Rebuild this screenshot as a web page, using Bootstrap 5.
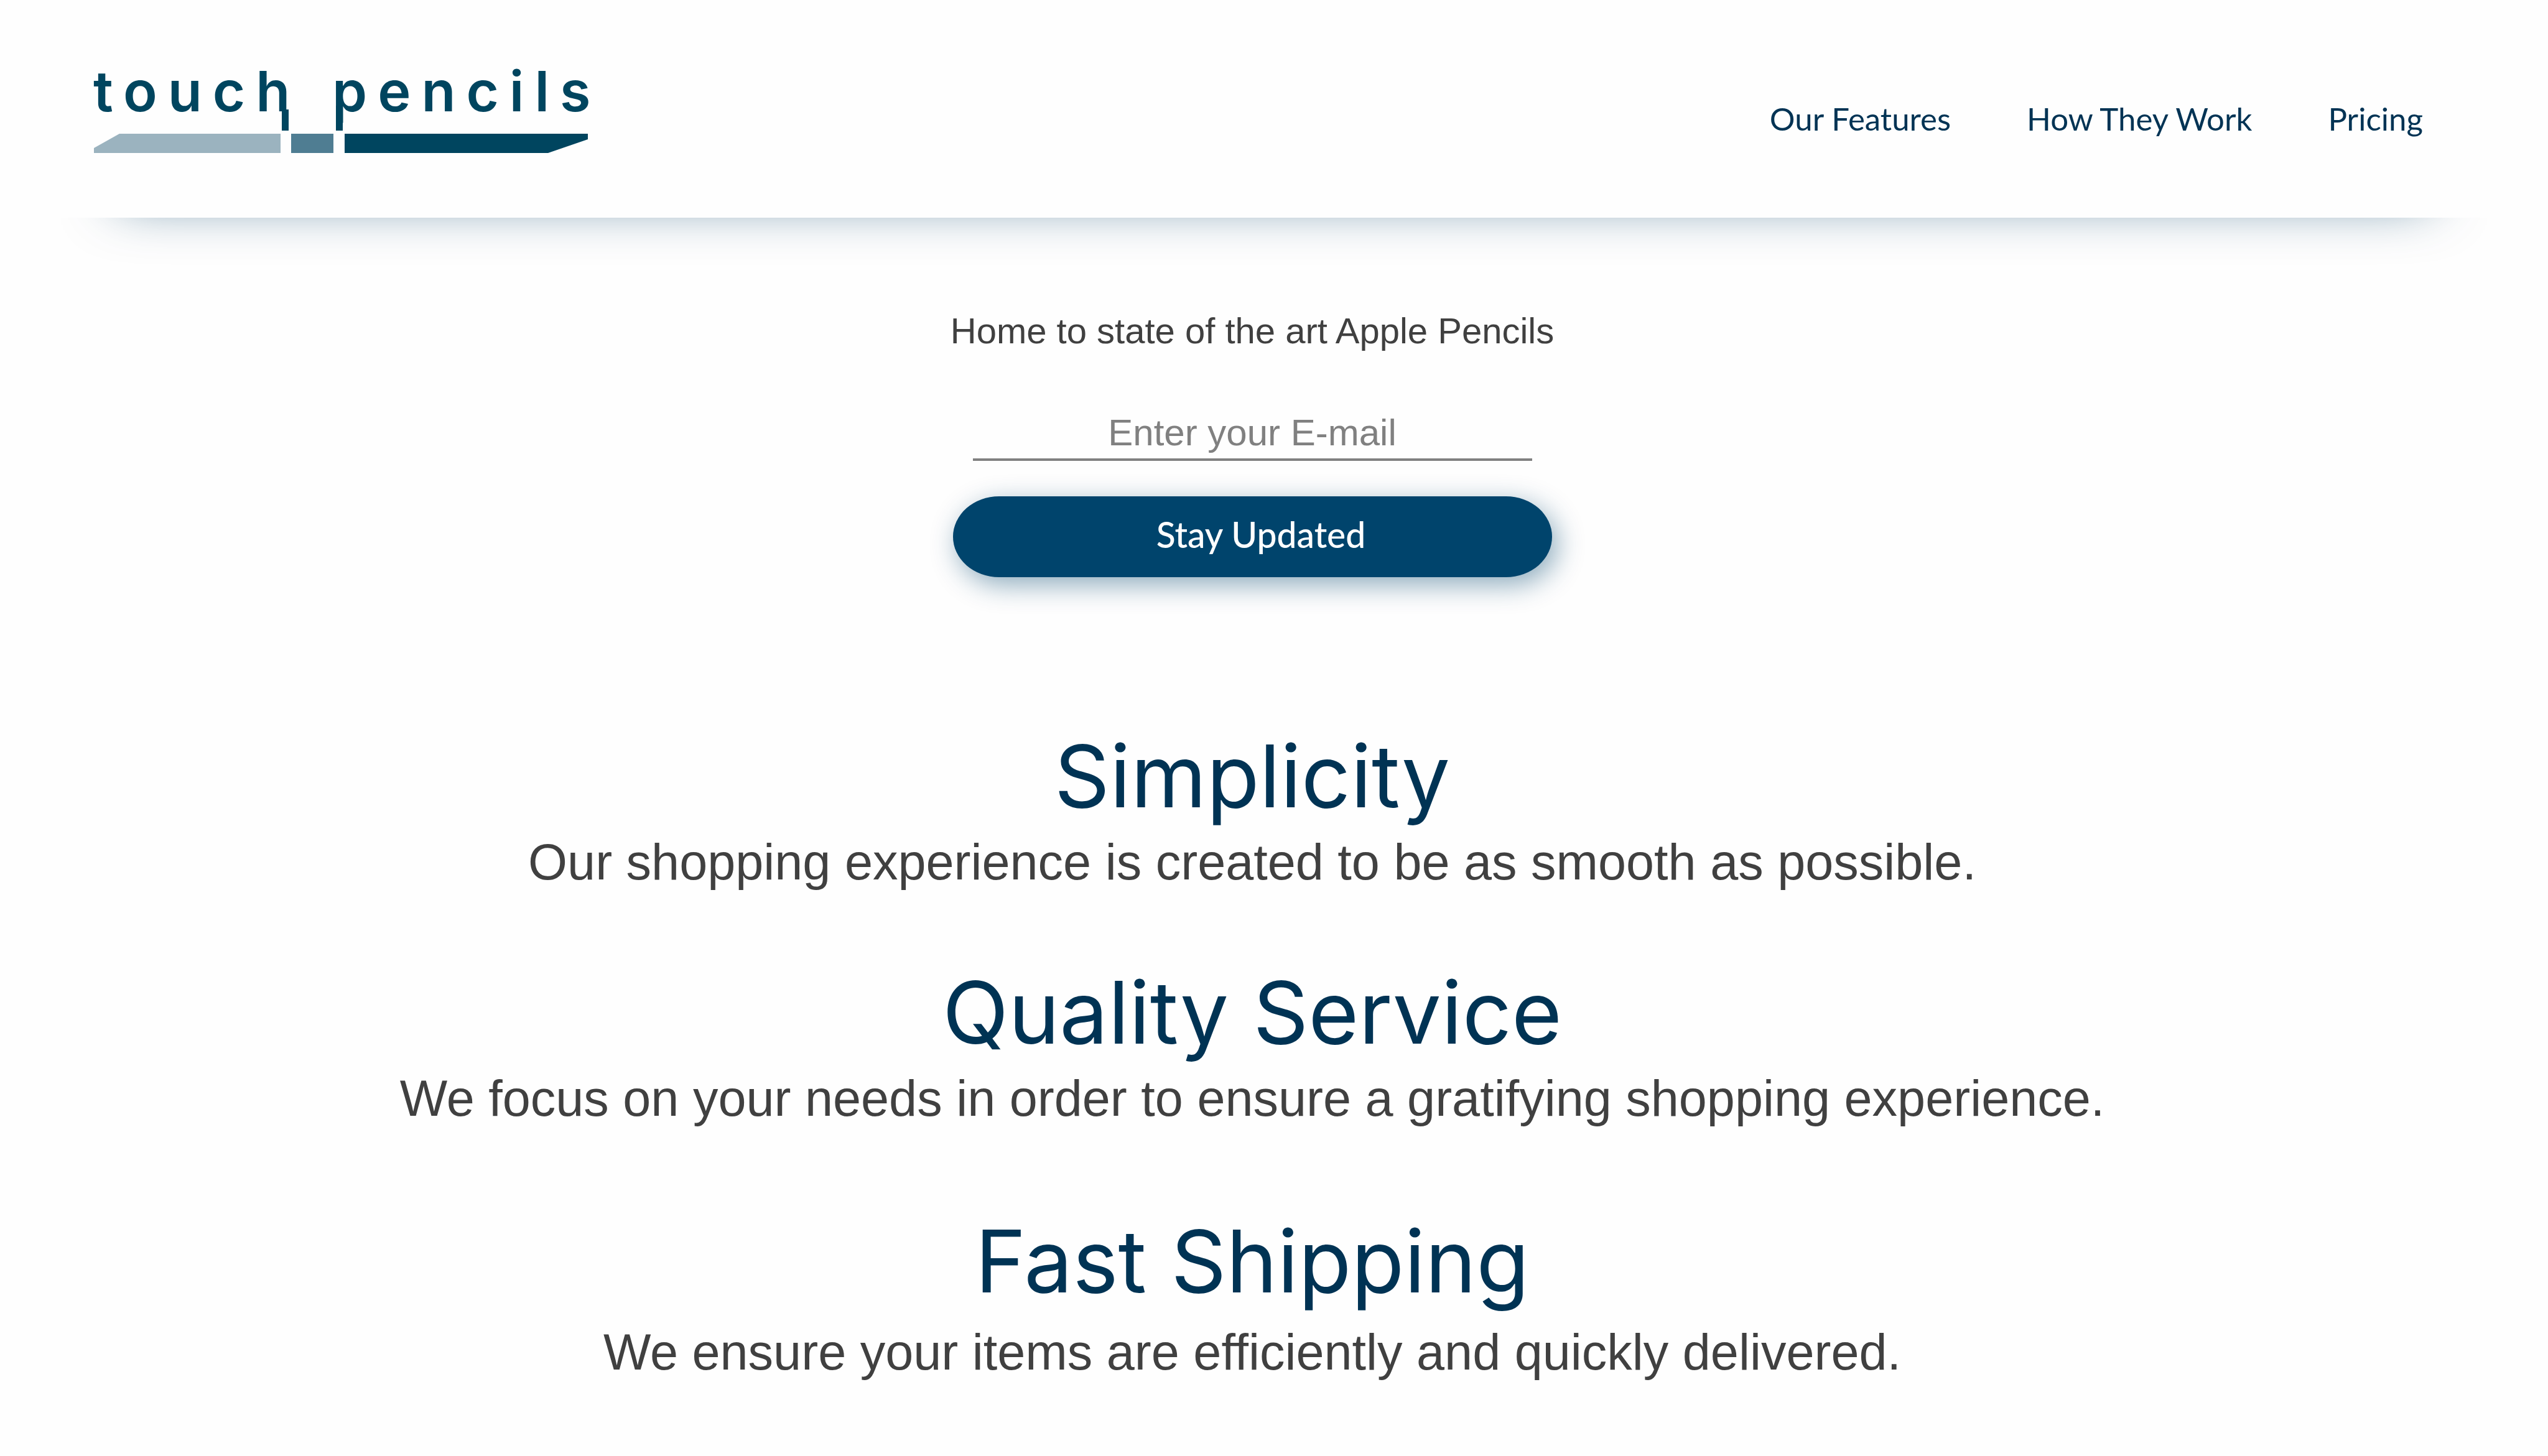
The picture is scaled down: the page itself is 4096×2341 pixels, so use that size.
<!DOCTYPE html>
<html lang="en">
<head>
<meta charset="utf-8">
<meta name="viewport" content="width=device-width, initial-scale=1">
<title>Touch Pencils</title>
<link href="https://cdn.jsdelivr.net/npm/bootstrap@5.3.0/dist/css/bootstrap.min.css" rel="stylesheet">
<style>
  body { background: #fefefe; color: #404040; font-family: "Liberation Sans", Arial, sans-serif; }
  .site-header { height: 350px; padding: 0 201px 0 151px; }
  .brand-logo { width: 800px; height: 150px; display: block; overflow: visible; }
  .brand-logo text { font-family: Inter, sans-serif; font-weight: 600; font-size: 90px; letter-spacing: 17px; }
  .site-nav { gap: 122px; padding-top: 32px; }
  .site-nav .nav-link { font-family: Lato, sans-serif; font-weight: 400; font-size: 51px; line-height: 64px; color: #003354; padding: 0; }
  /* soft shadow under the header that fades out toward both ends */
  .header-shade { height: 80px; overflow: hidden; }
  .header-shade::before { content: ""; display: block; height: 200px; margin: -230px 190px 0; box-shadow: 0 0 88px rgba(0, 64, 104, .7); }
  .page-main { padding: 62px 70px 60px 0; }
  .intro { font-size: 58px; line-height: 80px; }
  .signup { width: 963px; margin-top: 88px; }
  .email-box { width: 899px; font-size: 60px; line-height: 72px; padding: 0 0 5px; color: #404040; background: none; border: 0; border-bottom: 4px solid #808080; border-radius: 0; text-align: center; }
  .email-box::placeholder { color: #808080; opacity: 1; }
  .btn-signup { height: 130px; margin-top: 57px; padding: 0 0 6px 28px; border: 0; border-radius: 74px / 65px; background: #00446c; color: #fefefe; font-family: Lato, sans-serif; font-weight: 500; font-size: 57px; box-shadow: 8px 12px 44px rgba(0, 68, 108, .45); }
  .features { margin-top: 236px; }
  .feature-title { font-family: Inter, sans-serif; font-weight: 400; font-size: 139px; line-height: 168px; color: #003354; margin-bottom: 4px; }
  .feature-text { font-size: 81px; line-height: 100px; }
  .feature { margin-bottom: 108px; }
  .feature:last-child .feature-title { margin-top: 128px; margin-bottom: 12px; }
</style>
</head>
<body>
<header class="site-header d-flex align-items-center justify-content-between">
  <a href="#" aria-label="touch pencils">
    <svg class="brand-logo" viewBox="0 0 800 150" fill="#00455f">
      <text x="-1" y="79">touch</text>
      <text x="383" y="79">pencils</text>
      <path d="M302 76h11v34h-11zM389 70h11v40h-11z"/>
      <path d="M41 115H300v31H0v-8z" fill="#9bb3bf"/>
      <path d="M317 115h68v31h-68z" fill="#4f7d92"/>
      <path d="M403 115H794v9l-64 22H403z"/>
    </svg>
  </a>
  <nav class="site-nav nav flex-nowrap">
    <a class="nav-link" href="#features">Our Features</a>
    <a class="nav-link" href="#how">How They Work</a>
    <a class="nav-link" href="#pricing">Pricing</a>
  </nav>
</header>
<div class="header-shade"></div>
<main class="page-main text-center">
  <p class="intro mb-0">Home to state of the art Apple Pencils</p>
  <form class="signup mx-auto d-flex flex-column align-items-center">
    <input class="email-box" type="email" placeholder="Enter your E-mail" aria-label="Enter your E-mail">
    <button class="btn-signup btn w-100" type="submit">Stay Updated</button>
  </form>
  <div class="features" id="features">
    <section class="feature">
      <h2 class="feature-title">Simplicity</h2>
      <p class="feature-text mb-0">Our shopping experience is created to be as smooth as possible.</p>
    </section>
    <section class="feature">
      <h2 class="feature-title">Quality Service</h2>
      <p class="feature-text mb-0">We focus on your needs in order to ensure a gratifying shopping experience.</p>
    </section>
    <section class="feature mb-0">
      <h2 class="feature-title">Fast Shipping</h2>
      <p class="feature-text mb-0">We ensure your items are efficiently and quickly delivered.</p>
    </section>
  </div>
</main>
<script src="https://cdn.jsdelivr.net/npm/bootstrap@5.3.0/dist/js/bootstrap.bundle.min.js"></script>
</body>
</html>
